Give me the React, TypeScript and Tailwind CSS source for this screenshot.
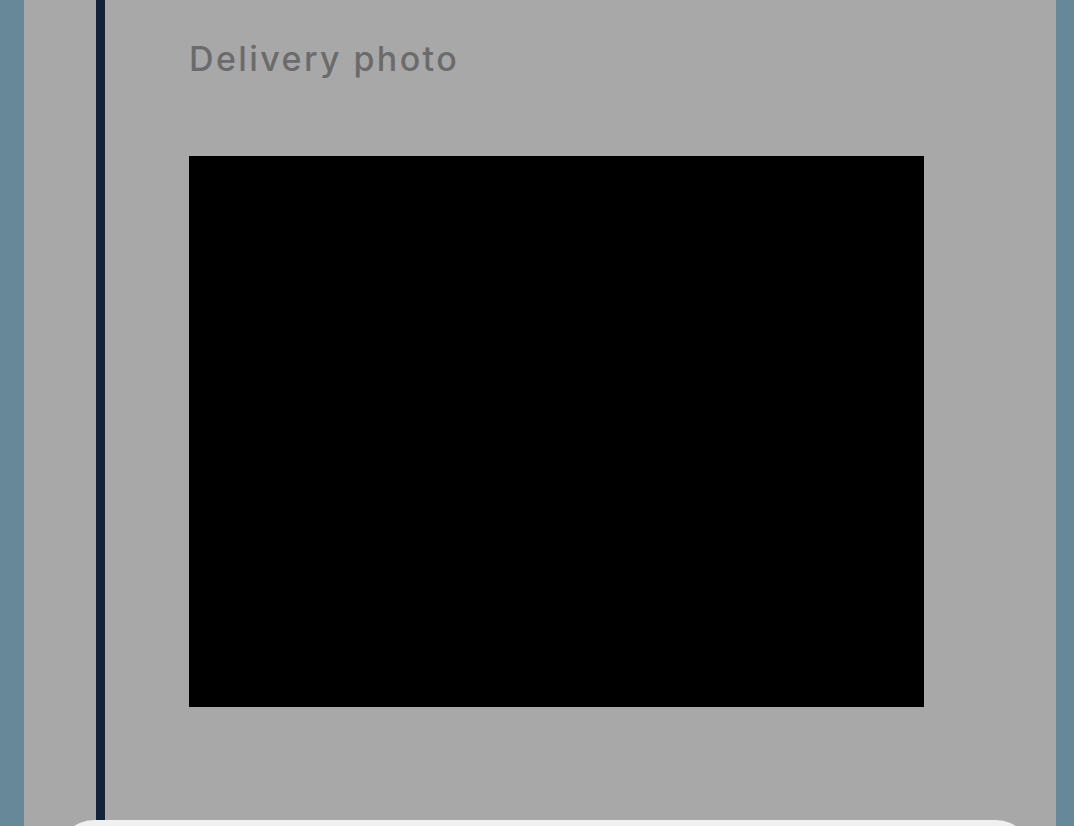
export default function App() {
  return (
    <div className="relative flex h-[826px] w-[1074px] overflow-hidden bg-[#668899]">
      <div className="w-[24px] shrink-0" />
      <div className="flex flex-1 bg-[#a8a8a8]">
        <div className="w-[72px] shrink-0" />
        <div className="w-[9px] shrink-0 bg-[#14213b]" />
        <div className="flex flex-col pl-[84px] pt-[37px]">
          <h2 className="text-[34px] font-medium leading-[44px] tracking-[2.4px] text-[#6b6b6b] [font-family:Inter,'Noto_Sans',sans-serif]">
            Delivery photo
          </h2>
          <div className="mt-[75px] h-[551px] w-[735px] bg-black" />
        </div>
      </div>
      <div className="w-[18px] shrink-0" />
      {/* bottom sheet peeking in */}
      <div className="absolute left-[58px] top-[820px] h-[60px] w-[974px] rounded-t-[36px] bg-[#f0f0f0]" />
    </div>
  )
}
